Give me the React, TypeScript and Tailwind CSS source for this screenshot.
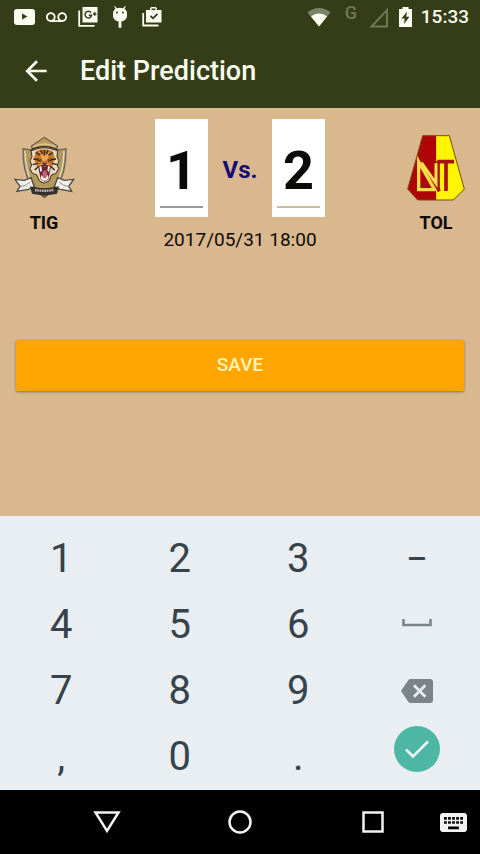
import { useState } from 'react';
import type { ReactNode } from 'react';
import { MdArrowBack, MdBackspace, MdKeyboard, MdVoicemail } from 'react-icons/md';

function StatusBar() {
  return (
    <div className="flex h-[34px] items-center justify-between pl-3 pr-[11px]">
      <div className="flex items-center gap-2">
        <svg viewBox="0 0 24 24" className="h-6 w-6">
          <rect x="2" y="4" width="21" height="16" rx="3" fill="currentColor" />
          <path d="M10 8.500v6l5.500-3z" fill="#353d18" />
        </svg>
        <span className="flex h-6 w-6 items-center justify-center">
          <MdVoicemail size={21} />
        </span>
        <svg viewBox="0 0 24 24" className="h-6 w-6">
          <path d="M6.500 2h15v15.500h-15z" fill="currentColor" />
          <path d="M3.200 5.500v15.300h15.300" fill="none" stroke="currentColor" strokeWidth="1.800" />
          <path
            d="M15 7.700a3.300 3.300 0 1 0 .6 2.500h-2.800M17 9h3.400M18.700 7.300v3.400"
            fill="none"
            stroke="#353d18"
            strokeWidth="1.500"
          />
        </svg>
        <svg viewBox="0 0 24 24" className="h-6 w-6">
          <path
            d="M5 8.500c0-2.300 1-3.700 2.400-4.600L6.300 1.600l.8-.5 1.700 2.200a9 9 0 0 1 6.400 0l1.700-2.200.8.500-1.100 2.300C18 4.800 19 6.200 19 8.500v2c0 3.300-2.400 5.500-5.600 6v6.300h-2.800v-6.300C7.400 16 5 13.800 5 10.500z"
            fill="currentColor"
          />
          <circle cx="9" cy="7.500" r="1" fill="#353d18" />
          <circle cx="15" cy="7.500" r="1" fill="#353d18" />
        </svg>
        <svg viewBox="0 0 24 24" className="h-6 w-6">
          <path
            d="M6 5h4V3.300L11.300 2h4.400L17 3.300V5h4.500v12.500H6zm5.500 0h4V3.500h-4z"
            fill="currentColor"
            fillRule="evenodd"
          />
          <path d="M3.200 8v12.500h15.300" fill="none" stroke="currentColor" strokeWidth="1.800" />
          <path d="M10.500 10.800l2.500 2.500 4.500-4.500" fill="none" stroke="#353d18" strokeWidth="1.800" />
        </svg>
      </div>
      <div className="flex items-center gap-2">
        <svg viewBox="0 0 28 24" className="h-6 w-7">
          <path d="M2.500 7.500C9 1.500 19 1.500 25.500 7.500L14 21.500z" fill="#7d8369" />
          <path d="M6 11.500c5-4 11-4 16 0l-8 10z" fill="currentColor" />
        </svg>
        <span className="w-5 pb-2 text-center text-lg font-medium leading-5 text-[#6f7757]">G</span>
        <svg viewBox="0 0 20 24" className="h-6 w-5">
          <path d="M2.500 21.500H18V5z" fill="none" stroke="#6f7757" strokeWidth="2" />
        </svg>
        <svg viewBox="0 0 16 24" className="h-6 w-4">
          <path d="M5.500 2h6v2h3.500v18H2V4h3.500z" fill="currentColor" />
          <path d="M10 6.500L4.500 13.500h3.200L7 19l5.500-7.200H9.300z" fill="#353d18" />
        </svg>
        <span className="text-[19px] font-medium leading-6">15:33</span>
      </div>
    </div>
  );
}

function TigresCrest() {
  return (
    <svg viewBox="-3 0 210 210" className="h-[70px] w-[70px]">
      {/* shield */}
      <path
        d="M39 56l24 4h81l24-4c-1 45-5 78-24 106-12 10-26 20-41 31-15-11-29-21-40-31C44 134 38 101 39 56z"
        fill="#b39a5c"
        stroke="#6b675c"
        strokeWidth="4"
      />
      <path d="M45 63c1 42 6 70 22 97M162 63c-1 42-6 70-22 97" fill="none" stroke="#e6dcc0" strokeWidth="4" />
      {/* roof */}
      <path d="M64 48l39-26 40 26-5 14H69z" fill="#b99a5e" stroke="#4d4638" strokeWidth="3" />
      <path d="M70 50c18-10 48-10 66 0" fill="none" stroke="#dcc690" strokeWidth="5" />
      <path d="M62 62c12-10 22-12 41-12s29 2 41 12" fill="none" stroke="#3b3229" strokeWidth="4" />
      {/* tiger head */}
      <path
        d="M63 62l14-4c15-6 37-6 52 0l14 4-2 18 6 13-5 12 4 11-9 15-12 3-8 19-14 7-15-7-8-19-12-3-8-15 5-11-5-12 6-13z"
        fill="#e6d9bd"
        stroke="#3b3026"
        strokeWidth="3"
      />
      <path d="M78 64c14-7 36-7 50 0l7 22-9 25-13-10H95l-14 10-9-25z" fill="#c8752a" />
      <path d="M88 66l15 9 16-9-8 26H97z" fill="#e8a65a" />
      <path
        d="M103 60v17M92 61l5 12M114 61l-5 12M77 68l14 7M129 68l-14 7M70 87l12 2M138 87l-12 2M68 104l15-4M141 104l-15-4M74 120l11-10M134 120l-11-10"
        stroke="#30231b"
        strokeWidth="4"
        fill="none"
      />
      <path d="M81 85l15 4-5 6-9-3zM126 85l-15 4 5 6 9-3z" fill="#221b17" />
      <path d="M85 89l7 2M122 89l-7 2" stroke="#f4ca54" strokeWidth="2" />
      <path d="M96 99h15l-3 9h-9z" fill="#693535" />
      <path d="M84 108l13-4 7 6 7-6 13 4-5 20-3 19-12 9-12-9-4-19z" fill="#6b2432" />
      <path d="M88 110l6-2 2 14-5 4zM120 110l-6-2-2 14 5 4z" fill="#fff8ea" />
      <path d="M98 126l6-5 7 5v15l-7 6-6-6z" fill="#c56273" />
      <path d="M92 144l3-10 5 10h8l5-10 3 10-8 8H99z" fill="#fff3e4" />
      {/* ribbon */}
      <path
        d="M15 148l28 3 20-8 10 27-17 8-35 6 9-15z"
        fill="#f1eee8"
        stroke="#4c4845"
        strokeWidth="4"
      />
      <path
        d="M191 148l-28 3-20-8-10 27 17 8 35 6-9-15z"
        fill="#f1eee8"
        stroke="#4c4845"
        strokeWidth="4"
      />
      <path d="M30 170l17-4 14-10M178 170l-17-4-14-10" fill="none" stroke="#98928a" strokeWidth="3" />
      <path d="M60 169c25 7 62 7 87 0l-6 22c-20 5-55 5-75 0z" fill="#362f2c" />
      <path d="M75 180c17 3 40 3 57 0" fill="none" stroke="#c9c0af" strokeWidth="7" strokeDasharray="5 2" />
      <path d="M91 194h24l-12 9z" fill="#6d5a35" stroke="#362f2c" strokeWidth="2" />
    </svg>
  );
}

function TolimaCrest() {
  return (
    <svg viewBox="33 60 210 210" className="h-[70px] w-[70px] overflow-visible">
      <path d="M98 77h41v193H83l-30-33z" fill="#b00508" />
      <path d="M139 77h39l45 160-33 33h-51z" fill="#fff500" />
      <path d="M98 77h80l45 160-33 33H83l-30-33z" fill="none" stroke="#7b4b12" strokeWidth="3" />
      <path d="M144 154v88M142 155h50M168 155v88" fill="none" stroke="#a8100c" strokeWidth="11" />
      <path d="M112 178l36 66" stroke="#a8100c" strokeWidth="10" />
      <path d="M86 155v84h48z" fill="none" stroke="#ffd84a" strokeWidth="10" />
      <path d="M94 158l44 62v-60" fill="none" stroke="#ffe04a" strokeWidth="9" />
    </svg>
  );
}

function Team({ name, children }: { name: string; children: ReactNode }) {
  return (
    <div className="flex flex-col items-center gap-[11px] pt-[22px]">
      {children}
      <p className="text-lg font-bold leading-6">{name}</p>
    </div>
  );
}

type ScoreProps = { label: string; value: string; line: string; onChange: (value: string) => void };

function ScoreInput({ label, value, line, onChange }: ScoreProps) {
  return (
    <div className="h-[98px] w-[53px] bg-white px-[5px] pt-4">
      <input
        aria-label={label}
        inputMode="numeric"
        value={value}
        onChange={(e) => onChange(e.target.value)}
        className={`h-[73px] w-full border-b-2 bg-transparent text-center text-[54px] font-bold outline-none ${line}`}
      />
    </div>
  );
}

function Keypad({ onKey }: { onKey: (key: string) => void }) {
  const rows = [
    ['1', '2', '3', '–'],
    ['4', '5', '6', 'space'],
    ['7', '8', '9', 'backspace'],
    [',', '0', '.', 'done'],
  ];

  const icons: Record<string, ReactNode> = {
    '–': <span className="text-[32px] font-medium">–</span>,
    space: (
      <svg viewBox="0 0 32 10" className="mb-1 h-[10px] w-8">
        <path d="M2.500 1v6h27V1" fill="none" stroke="#7b8487" strokeWidth="2.500" />
      </svg>
    ),
    backspace: <MdBackspace size={32} color="#7b8589" />,
    done: (
      <span className="mb-4 flex h-[46px] w-[46px] items-center justify-center rounded-full bg-[#4db6a4]">
        <svg viewBox="0 0 26 20" className="h-5 w-[26px]">
          <path d="M2 10.500l7 7L24 2.500" fill="none" stroke="#eefaf7" strokeWidth="2.500" />
        </svg>
      </span>
    ),
  };

  return (
    <div className="grid auto-rows-[66px] grid-cols-4 bg-[#e8eef1] pl-0.5 pr-1 pt-[10px] text-[#37424a]">
      {rows.flat().map((key) => (
        <button
          key={key}
          type="button"
          aria-label={key}
          onClick={() => onKey(key)}
          className="flex items-center justify-center text-[40px] leading-[66px]"
        >
          {icons[key] ?? key}
        </button>
      ))}
    </div>
  );
}

function NavBar() {
  return (
    <nav className="flex h-16 items-center bg-black pl-10 text-[#f2f2f2]">
      <div className="grid flex-1 grid-cols-3">
        <button type="button" aria-label="Back" className="flex justify-center">
          <svg viewBox="0 0 28 24" className="h-6 w-7">
            <path d="M2.500 2.500h23L14 21z" fill="none" stroke="currentColor" strokeWidth="2.500" />
          </svg>
        </button>
        <button type="button" aria-label="Home" className="flex justify-center">
          <svg viewBox="0 0 24 24" className="h-6 w-6">
            <circle cx="12" cy="12" r="10.500" fill="none" stroke="currentColor" strokeWidth="2.500" />
          </svg>
        </button>
        <button type="button" aria-label="Recent apps" className="flex justify-center">
          <svg viewBox="0 0 24 24" className="h-6 w-6">
            <rect x="2.500" y="2.500" width="19" height="19" fill="none" stroke="currentColor" strokeWidth="2.500" />
          </svg>
        </button>
      </div>
      <button type="button" aria-label="Switch keyboard" className="flex w-10 justify-start">
        <MdKeyboard viewBox="2 5 20 14" className="h-[19px] w-[27px]" />
      </button>
    </nav>
  );
}

export default function App() {
  const [home, setHome] = useState('1');
  const [away, setAway] = useState('2');

  function handleKey(key: string) {
    if (key === 'backspace') setHome(home.slice(0, -1));
    else if (/^\d$/.test(key)) setHome(key);
  }

  return (
    <div className="flex min-h-screen flex-col bg-[#dab88e] font-['Roboto',sans-serif] text-[#0c0a08]">
      <header className="bg-[#353d18] text-[#fbfdf0]">
        <StatusBar />
        <div className="flex h-[74px] items-center gap-7 pl-5">
          <button type="button" aria-label="Go back">
            <MdArrowBack size={32} />
          </button>
          <h1 className="text-[27px] font-medium leading-8">Edit Prediction</h1>
        </div>
      </header>

      <main className="flex-1">
        <section className="grid grid-cols-[88px_1fr_88px]">
          <Team name="TIG">
            <TigresCrest />
          </Team>
          <div className="flex flex-col items-center gap-[11px] pt-[11px]">
            <div className="flex items-center">
              <ScoreInput label="TIG goals" value={home} line="border-[#999999]" onChange={setHome} />
              <span className="w-16 pt-1 text-center text-2xl font-bold text-[#150a78]">Vs.</span>
              <ScoreInput label="TOL goals" value={away} line="border-[#c8bda0]" onChange={setAway} />
            </div>
            <time className="text-[19px] leading-6">2017/05/31 18:00</time>
          </div>
          <Team name="TOL">
            <TolimaCrest />
          </Team>
        </section>
        <div className="px-4 pb-8 pt-[88px]">
          <button
            type="button"
            className="h-[51px] w-full rounded-xs bg-[#ffa500] text-[19px] font-medium text-[#fff3b8] shadow-[0_1px_3px_rgba(0,0,0,0.4)]"
          >
            SAVE
          </button>
        </div>
      </main>

      <Keypad onKey={handleKey} />
      <NavBar />
    </div>
  );
}
